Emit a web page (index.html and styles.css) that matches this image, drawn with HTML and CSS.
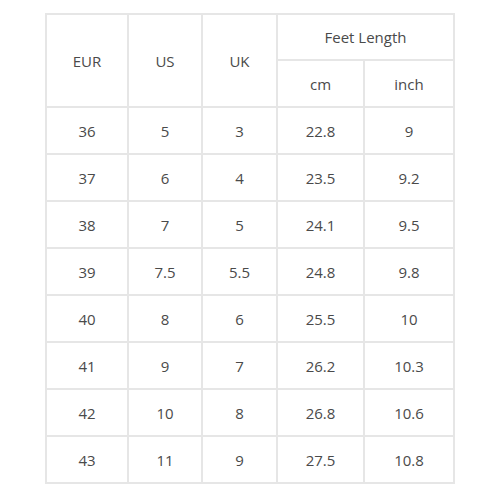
FILE: index.html
```html
<!DOCTYPE html>
<html>
<head>
<meta charset="utf-8">
<link rel="stylesheet" href="styles.css">
</head>
<body>
<div class="chart">
  <div class="cell h-span">EUR</div>
  <div class="cell h-span">US</div>
  <div class="cell h-span">UK</div>
  <div class="cell h-group">Feet Length</div>
  <div class="cell">cm</div>
  <div class="cell">inch</div>

  <div class="cell">36</div><div class="cell">5</div><div class="cell">3</div><div class="cell">22.8</div><div class="cell">9</div>
  <div class="cell">37</div><div class="cell">6</div><div class="cell">4</div><div class="cell">23.5</div><div class="cell">9.2</div>
  <div class="cell">38</div><div class="cell">7</div><div class="cell">5</div><div class="cell">24.1</div><div class="cell">9.5</div>
  <div class="cell">39</div><div class="cell">7.5</div><div class="cell">5.5</div><div class="cell">24.8</div><div class="cell">9.8</div>
  <div class="cell">40</div><div class="cell">8</div><div class="cell">6</div><div class="cell">25.5</div><div class="cell">10</div>
  <div class="cell">41</div><div class="cell">9</div><div class="cell">7</div><div class="cell">26.2</div><div class="cell">10.3</div>
  <div class="cell">42</div><div class="cell">10</div><div class="cell">8</div><div class="cell">26.8</div><div class="cell">10.6</div>
  <div class="cell">43</div><div class="cell">11</div><div class="cell">9</div><div class="cell">27.5</div><div class="cell">10.8</div>
</div>
</body>
</html>
```

FILE: styles.css
```css
html, body {
  margin: 0;
  padding: 0;
  background: #ffffff;
}

body {
  padding: 13px 0 0 45px;
}

.chart {
  display: inline-grid;
  grid-template-columns: 80px 72px 73px 85px 88px;
  grid-template-rows: 44px 45px repeat(8, 45px);
  gap: 2px;
  padding: 2px;
  background: #e6e6e6;
  font-family: "Open Sans", "DejaVu Sans", sans-serif;
  font-size: 15px;
  color: #4a4a4a;
}

.cell {
  background: #ffffff;
  display: flex;
  align-items: center;
  justify-content: center;
}

.h-span {
  grid-row: span 2;
}

.h-group {
  grid-column: span 2;
}
```
